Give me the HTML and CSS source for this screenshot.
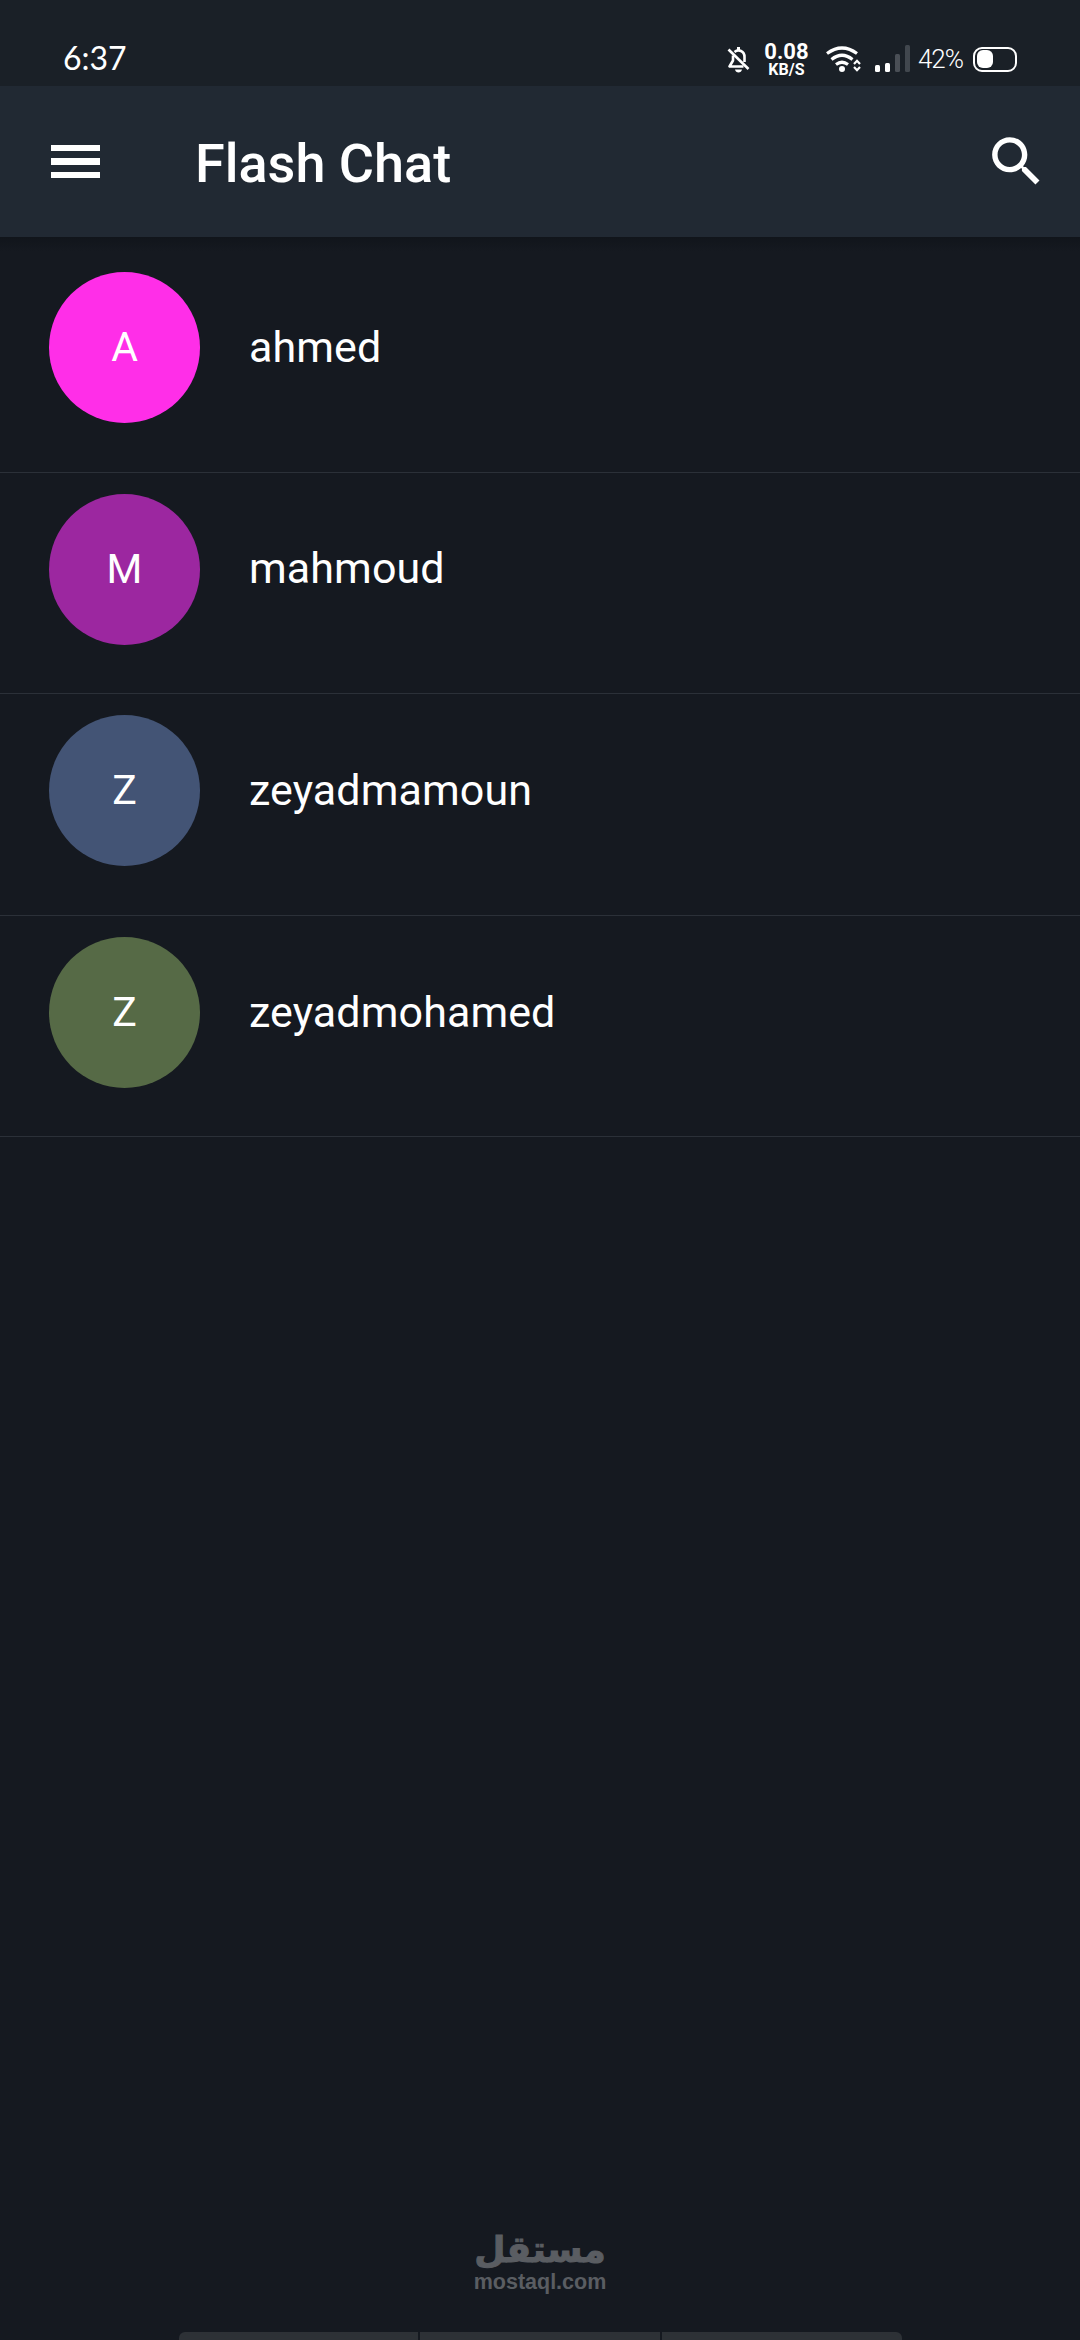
FILE: index.html
```html
<!DOCTYPE html>
<html lang="en">
<head>
    <meta charset="UTF-8">
    <meta name="viewport" content="width=device-width, initial-scale=1.0">
    <title>Flash Chat</title>
    <link rel="stylesheet" href="styles.css">
</head>
<body>
    <div class="status-bar">
        <span class="clock">6:37</span>
        <div class="status-icons">
            <svg class="bell" viewBox="0 0 23 26" width="23" height="26">
                <path d="M6 8.5 V13.5 L2.5 19.5 H16.5 M7.5 5 C11.5 1.8 17.5 3.8 17.5 10 V15" fill="none" stroke="#fff" stroke-width="2.6" stroke-linejoin="round"/>
                <rect x="10" y="0" width="3" height="3.5" fill="#fff"/>
                <path d="M1.5 2.5 L21.5 22" stroke="#fff" stroke-width="2.6"/>
                <path d="M8 22.6 H15 C14.5 26.4 8.5 26.4 8 22.6 Z" fill="#fff"/>
            </svg>
            <div class="speed">
                <span class="speed-value">0.08</span>
                <span class="speed-unit">KB/S</span>
            </div>
            <svg class="wifi" viewBox="0 0 36 26" width="36" height="26">
                <path d="M1 7.5 Q16 -3.5 31 7.5" fill="none" stroke="#fff" stroke-width="3.2"/>
                <path d="M5.5 13.5 Q16 5 26.5 13.5" fill="none" stroke="#fff" stroke-width="3.2"/>
                <path d="M10 18.5 Q16 14 22 18.5" fill="none" stroke="#fff" stroke-width="3.2"/>
                <circle cx="16" cy="23" r="3" fill="#fff"/>
                <path d="M28 18 L31 14.8 L34 18 M28 21 L31 24.2 L34 21" fill="none" stroke="#fff" stroke-width="2.2"/>
            </svg>
            <div class="signal">
                <span class="bar bar-1"></span>
                <span class="bar bar-2"></span>
                <span class="bar bar-3"></span>
                <span class="bar bar-4"></span>
            </div>
            <span class="battery-text">42%</span>
            <div class="battery"><span class="battery-fill"></span></div>
        </div>
    </div>

    <header class="app-bar">
        <button class="menu-btn" aria-label="Menu">
            <span></span><span></span><span></span>
        </button>
        <h1 class="title">Flash Chat</h1>
        <svg class="search" viewBox="0 0 24 24" width="65" height="65">
            <path fill="#fff" d="M15.5 14h-.79l-.28-.27C15.41 12.59 16 11.11 16 9.5 16 5.91 13.09 3 9.5 3S3 5.91 3 9.5 5.91 16 9.5 16c1.61 0 3.09-.59 4.23-1.57l.27.28v.79l5 4.99L20.49 19l-4.99-5zm-6 0C7.01 14 5 11.99 5 9.5S7.01 5 9.5 5 14 7.01 14 9.5 11.99 14 9.5 14z"/>
        </svg>
    </header>

    <main class="chat-list">
        <div class="chat-row">
            <div class="avatar avatar-pink">A</div>
            <span class="name">ahmed</span>
        </div>
        <div class="chat-row">
            <div class="avatar avatar-purple">M</div>
            <span class="name">mahmoud</span>
        </div>
        <div class="chat-row">
            <div class="avatar avatar-blue">Z</div>
            <span class="name">zeyadmamoun</span>
        </div>
        <div class="chat-row">
            <div class="avatar avatar-green">Z</div>
            <span class="name">zeyadmohamed</span>
        </div>
    </main>

    <div class="watermark">
        <span class="watermark-ar" lang="ar" dir="rtl">مستقل</span>
        <span class="watermark-en">mostaql.com</span>
    </div>

    <div class="nav-strip">
        <span></span><span></span><span></span>
    </div>
</body>
</html>
```

FILE: styles.css
```css
:root {
    --status-bg: #1a2027;
    --bar-bg: #212933;
    --page-bg: #151920;
    --line: #2b3038;
}

* {
    box-sizing: border-box;
}

html, body {
    height: 100%;
}

body {
    margin: 0;
    display: flex;
    flex-direction: column;
    background-color: var(--page-bg);
    color: #fff;
    font-family: Roboto, sans-serif;
}

/* status bar */
.status-bar {
    height: 86px;
    flex: none;
    display: flex;
    justify-content: space-between;
    padding: 39px 63px 0 63px;
    background-color: var(--status-bg);
}

.clock {
    font-family: Lato, sans-serif;
    font-size: 32px;
    line-height: 38px;
}

.status-icons {
    display: flex;
    align-items: flex-start;
    margin-top: 4px;
}

.bell {
    margin-top: 4px;
}

.speed {
    display: flex;
    flex-direction: column;
    align-items: center;
    margin-left: 15px;
    margin-top: -2px;
    width: 43px;
    font-weight: 700;
}

.speed-value {
    font-size: 22px;
    line-height: 22px;
}

.speed-unit {
    font-size: 16px;
    line-height: 14px;
}

.wifi {
    margin-left: 18px;
    margin-top: 3px;
}

.signal {
    display: flex;
    align-items: flex-end;
    gap: 5px;
    height: 27px;
    margin-left: 13px;
    margin-top: 2px;
}

.bar {
    width: 5px;
    border-radius: 1.5px;
    background-color: #fff;
}

.bar-1 { height: 7px; }
.bar-2 { height: 9px; }
.bar-3 { height: 18px; background-color: #4a4f56; }
.bar-4 { height: 27px; background-color: #41474e; }

.battery-text {
    margin-left: 8px;
    font-size: 26px;
    line-height: 32px;
    font-weight: 300;
    letter-spacing: -1px;
}

.battery {
    width: 44px;
    height: 25px;
    margin-left: 10px;
    margin-top: 4px;
    padding: 1px 2px;
    border: 2.5px solid #fff;
    border-radius: 9px;
}

.battery-fill {
    display: block;
    width: 16px;
    height: 18px;
    border-radius: 6px;
    background-color: #fff;
}

/* app bar */
.app-bar {
    height: 151px;
    flex: none;
    display: flex;
    align-items: center;
    padding: 0 31px 0 51px;
    background-color: var(--bar-bg);
}

.menu-btn {
    display: flex;
    flex-direction: column;
    gap: 7px;
    width: 49px;
    padding: 0;
    border: none;
    background: none;
}

.menu-btn span {
    display: block;
    height: 6.5px;
    background-color: #fff;
}

.title {
    flex: 1;
    margin: 3px 0 0 95px;
    font-size: 54px;
    font-weight: 500;
}

/* chats */
.chat-list {
    flex: 1;
    padding-top: 14px;
    background-image: linear-gradient(#11151b, var(--page-bg) 14px);
}

.chat-row {
    display: flex;
    align-items: center;
    gap: 49px;
    height: 221.6px;
    padding: 21px 0 48px 49px;
    border-bottom: 1.5px solid var(--line);
}

.avatar {
    width: 151px;
    height: 151px;
    display: flex;
    align-items: center;
    justify-content: center;
    padding-bottom: 1px;
    border-radius: 50%;
    font-size: 41px;
}

.avatar-pink { background-color: #ff2ee8; }
.avatar-purple { background-color: #9c27a0; }
.avatar-blue { background-color: #435475; }
.avatar-green { background-color: #566a46; }

.name {
    margin-bottom: 2px;
    font-size: 43px;
    letter-spacing: 0.1px;
}

/* footer */
.watermark {
    flex: none;
    display: flex;
    flex-direction: column;
    align-items: center;
    margin-bottom: 38px;
    color: #5a5d62;
}

.watermark-ar {
    font-family: "DejaVu Sans", sans-serif;
    font-size: 36px;
    font-weight: 700;
    line-height: 40px;
    -webkit-text-stroke: 1px #5a5d62;
}

.watermark-en {
    font-family: "Liberation Sans", sans-serif;
    font-size: 21.5px;
    font-weight: 700;
    line-height: 24px;
}

.nav-strip {
    flex: none;
    display: flex;
    gap: 2px;
    width: 723px;
    height: 8px;
    margin: 0 auto;
}

.nav-strip span {
    flex: 1;
    background-color: #2d3136;
}

.nav-strip span:first-child {
    border-top-left-radius: 6px;
}

.nav-strip span:last-child {
    border-top-right-radius: 6px;
}
```
